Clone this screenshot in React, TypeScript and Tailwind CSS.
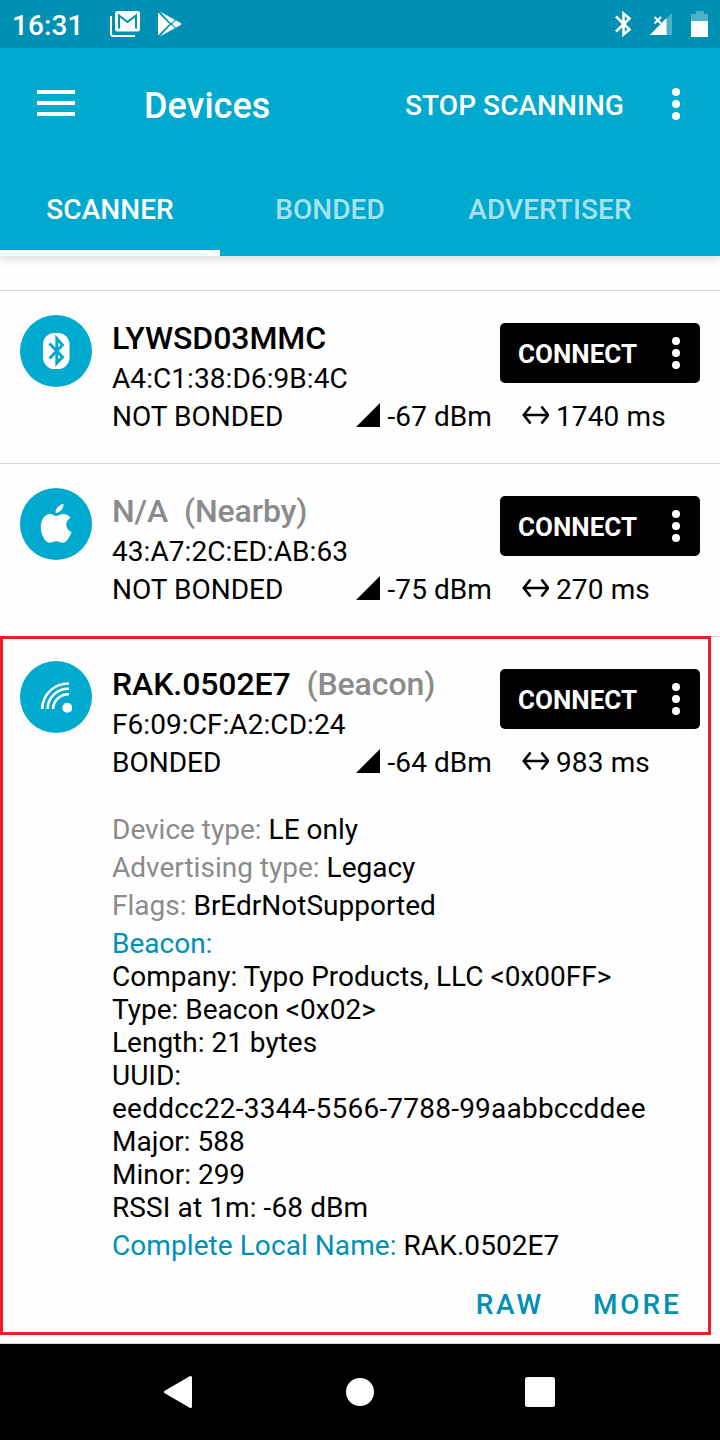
import type { ReactNode } from 'react';

function Dots() {
  return (
    <svg className="block h-8 w-2 shrink-0" viewBox="0 0 8 32" fill="currentColor">
      <circle cx="4" cy="4" r="4" />
      <circle cx="4" cy="16" r="4" />
      <circle cx="4" cy="28" r="4" />
    </svg>
  );
}

function StatusBar() {
  return (
    <div className="flex h-12 items-center bg-[#0090b3] text-white">
      <span className="ml-[12px] w-[98px] pt-[3px] text-[28px] leading-[33px] font-medium tracking-[0.1px]">16:31</span>
      <svg className="h-[26px] w-[30px]" viewBox="0 0 30 26">
        <path d="M1 5V22.500Q1 25 3.500 25H25" fill="none" stroke="#fff" strokeWidth="2" />
        <rect x="5" y="0" width="25" height="20.500" rx="2.500" fill="#fff" />
        <path d="M9 17.500V4.500L17.500 11L26 4.500V17.500" fill="none" stroke="#0090b3" strokeWidth="2" />
      </svg>
      <svg className="ml-[18px] h-[26px] w-[24px]" viewBox="0 0 24 26" fill="#fff">
        <path d="M0 1.500V24.500L11.500 13z" />
        <path d="M2 0.500L17 9L12.800 12.200z" />
        <path d="M2 25.500L17 17L12.800 13.800z" />
        <path d="M18 9.500L23 12.200Q23.800 13 23 13.800L18 16.500L14 13z" />
      </svg>
      <svg className="ml-auto h-[26px] w-[18px]" viewBox="0 0 18 26" fill="none" stroke="#fff" strokeWidth="2.600">
        <path d="M2 5.500L15.500 18.500L9.500 23.500V2.500L15.500 7.500L2 20.500" />
      </svg>
      <svg className="ml-[18px] h-[24px] w-[23px]" viewBox="0 0 23 24">
        <path d="M0 23L22 1V23z" fill="#fff" opacity=".3" />
        <path d="M0 23L16.500 6V23z" fill="#fff" />
        <path d="M4.500 5L11 11.500M11 5L4.500 11.500" stroke="#0090b3" strokeWidth="4" />
        <path d="M4.500 5L11 11.500M11 5L4.500 11.500" stroke="#fff" strokeWidth="2" />
      </svg>
      <svg className="mr-[12px] ml-[18px] h-[26px] w-[17px]" viewBox="0 0 17 26" fill="#fff">
        <path d="M5 0H13V3H17V10H0V3H5z" opacity=".3" />
        <path d="M0 10H17V26H0z" />
      </svg>
    </div>
  );
}

function BluetoothGlyph() {
  return (
    <svg className="h-9 w-[28px]" viewBox="0 0 28 36">
      <rect x="1" y="0" width="26.500" height="36" rx="11.500" fill="#fff" />
      <path d="M7.500 10.500L20.500 24L14.800 30V5.500L20.500 12L7.500 25.500" fill="none" stroke="#00a9ce" strokeWidth="2.900" />
    </svg>
  );
}

function AppleGlyph() {
  return (
    <svg className="h-10 w-8" viewBox="0 0 32 40" fill="#fff">
      <path d="M23.500 0C23.700 5 19.500 9 15.600 9C15.200 4.300 19.500.4 23.500 0z" />
      <path d="M16 12C18.200 12 20 10 23.500 10C26.500 10 29 11.500 30.500 13.700C24.500 17 25 25.500 31.500 28C30 32.500 26.800 38.700 22.800 38.700C20 38.700 19 37.200 16.200 37.200C13.300 37.200 12 38.700 9.500 38.700C5 38.700.8 30.500.8 23C.8 15 5.500 10 10 10C12.800 10 14.500 12 16 12z" />
    </svg>
  );
}

function BeaconGlyph() {
  return (
    <svg className="h-8 w-8" viewBox="0 0 32 32" fill="none" stroke="#fff" strokeWidth="2.600">
      <path d="M2.200 28A26 26 0 0 1 29 2.500" />
      <path d="M7.600 28A20.500 20.500 0 0 1 29 7.800" />
      <path d="M13 28A15.500 15.500 0 0 1 29 13.200" />
      <circle cx="27.300" cy="26.700" r="5" fill="#fff" stroke="none" />
    </svg>
  );
}

type Device = {
  icon: ReactNode;
  name: ReactNode;
  address: string;
  bond: string;
  rssi: string;
  interval: string;
};

function DeviceHeader({ icon, name, address, bond, rssi, interval }: Device) {
  return (
    <div className="flex pr-5 pl-5">
      <div className="mt-6 flex size-[72px] shrink-0 items-center justify-center rounded-full bg-[#00a9ce]">{icon}</div>
      <div className="ml-5 flex-1">
        <div className="flex justify-between">
          <div className="pt-7">
            <div className="text-[32px] leading-[38px] font-medium tracking-[-0.08px] whitespace-pre">{name}</div>
            <div className="mt-[5px] tracking-[0.07px]">{address}</div>
          </div>
          <button className="mt-8 flex h-[60px] w-[200px] items-center justify-between rounded-[5px] bg-black pr-5 pl-[18px] text-white">
            <span className="pt-[3px] text-[26px] leading-[33px] font-bold">CONNECT</span>
            <Dots />
          </button>
        </div>
        <div className="mt-[5px] flex whitespace-nowrap">
          <span className="w-[244px]">{bond}</span>
          <svg className="mt-[3px] h-6 w-6" viewBox="0 0 24 24">
            <path d="M0 24L24 0V24z" />
          </svg>
          <span className="ml-[7.500px] w-[133.500px] tracking-[0.08px]">{rssi}</span>
          <svg className="mt-[5px] h-5 w-[28px]" viewBox="0 0 28 20" fill="none" stroke="#000" strokeWidth="2.600">
            <path d="M3 10H27M9.500 1.500L2.800 10L9.500 18.500M20.500 1.500L27.200 10L20.500 18.500" />
          </svg>
          <span className="ml-[7px] tracking-[0.12px]">{interval}</span>
        </div>
      </div>
    </div>
  );
}

const labelled = [
  ['Device type:', 'LE only'],
  ['Advertising type:', 'Legacy'],
  ['Flags:', 'BrEdrNotSupported'],
];

const beacon = [
  'Company: Typo Products, LLC <0x00FF>',
  'Type: Beacon <0x02>',
  'Length: 21 bytes',
  'UUID:',
];

export default function App() {
  return (
    <div className="flex h-[1440px] w-[720px] flex-col overflow-hidden bg-[#fefefe] font-['Roboto',sans-serif] text-[28px] leading-[33px] text-black">
      <header className="z-10 h-64 shrink-0 bg-[#00a9ce] text-white shadow-[0_2px_10px_rgba(0,0,0,0.16)]">
        <StatusBar />
        <div className="flex h-28 items-center pr-10 pl-[37px]">
          <svg className="mb-[2px] h-[26px] w-[38px]" viewBox="0 0 38 26" fill="#fff">
            <path d="M0 0H38V4H0zM0 11H38V15H0zM0 22H38V26H0z" />
          </svg>
          <h1 className="ml-[69px] pt-[4px] text-[36px] leading-[42px] font-medium">Devices</h1>
          <span className="mr-[48px] ml-auto pt-[2px] font-medium tracking-[0.06px]">STOP SCANNING</span>
          <Dots />
        </div>
        <nav className="flex h-24 text-center font-medium tracking-[0.08px]">
          <div className="w-[220px] border-b-[6px] border-white pt-[33px]">SCANNER</div>
          <div className="w-[220px] pt-[33px] text-[#a6e1ef]">BONDED</div>
          <div className="w-[220px] pt-[33px] text-[#a6e1ef]">ADVERTISER</div>
        </nav>
      </header>
      <main className="h-[1088px] shrink-0 border-b border-[#d9d9d9] pt-[34px]">
        <section className="h-[173px] border-t border-[#d9d9d9]">
          <DeviceHeader icon={<BluetoothGlyph />} name="LYWSD03MMC" address="A4:C1:38:D6:9B:4C" bond="NOT BONDED" rssi="-67 dBm" interval="1740 ms" />
        </section>
        <section className="h-[173px] border-t border-[#d9d9d9]">
          <DeviceHeader icon={<AppleGlyph />} name={<span className="text-[#8b8b8b]">N/A  (Nearby)</span>} address="43:A7:2C:ED:AB:63" bond="NOT BONDED" rssi="-75 dBm" interval="270 ms" />
        </section>
        <section className="relative h-[707px] border-t border-[#d9d9d9]">
          <DeviceHeader icon={<BeaconGlyph />} name={<>RAK.0502E7  <span className="text-[#8b8b8b]">(Beacon)</span></>} address="F6:09:CF:A2:CD:24" bond="BONDED" rssi="-64 dBm" interval="983 ms" />
          <div className="mt-[34px] pl-28 whitespace-nowrap">
            {labelled.map(([label, value]) => (
              <div key={label} className="mb-[5px]">
                <span className="text-[#8b8b8b]">{label}</span> {value}
              </div>
            ))}
            <div className="text-[#0090b3]">Beacon:</div>
            {beacon.map((line) => (
              <div key={line}>{line}</div>
            ))}
            <div className="tracking-[0.22px]">eeddcc22-3344-5566-7788-99aabbccddee</div>
            <div>Major: 588</div>
            <div>Minor: 299</div>
            <div className="tracking-[0.1px]">RSSI at 1m: -68 dBm</div>
            <div className="mt-[5px] tracking-[0.07px]">
              <span className="text-[#0090b3]">Complete Local Name:</span> RAK.0502E7
            </div>
          </div>
          <div className="mt-[26px] flex justify-end gap-[49px] pr-[38.500px] font-medium tracking-[2.800px] text-[#0090b3]">
            <button>RAW</button>
            <button>MORE</button>
          </div>
          <div className="pointer-events-none absolute top-[-1px] left-0 h-[699px] w-[711px] border-[3px] border-[#ee1c24]" />
        </section>
      </main>
      <footer className="h-24 shrink-0 bg-black">
        <svg className="block h-24 w-[720px]" viewBox="0 0 720 96" fill="#fff">
          <path d="M165.500 48L190.500 33.500V62.500z" stroke="#fff" strokeWidth="3" strokeLinejoin="round" />
          <circle cx="360" cy="48" r="14" />
          <rect x="525" y="33" width="30" height="30" rx="2.500" />
        </svg>
      </footer>
    </div>
  );
}
